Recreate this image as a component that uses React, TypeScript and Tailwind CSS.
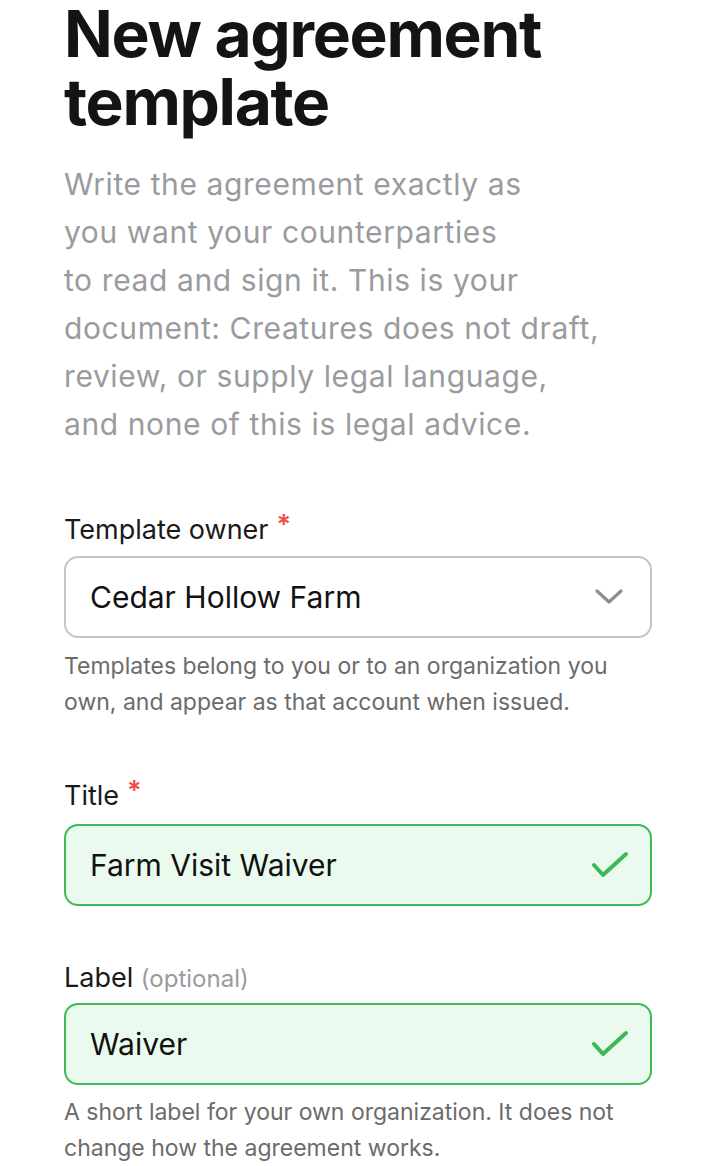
const font = { fontFamily: "Inter, 'Liberation Sans', sans-serif" };

function Required() {
  return <span className="relative -top-[5px] ml-[8px] font-semibold text-[#f04b4b]">*</span>;
}

function Chevron() {
  return (
    <svg width="28" height="16" viewBox="0 0 28 16" fill="none" className="shrink-0">
      <polyline points="2,2 14,13 26,2" stroke="#8c8d8f" strokeWidth="3.2" strokeLinecap="round" strokeLinejoin="round" />
    </svg>
  );
}

function Tick() {
  return (
    <svg width="38" height="28" viewBox="0 0 38 28" fill="none" className="shrink-0">
      <polyline points="4,14 13,24 36,3" stroke="#3cb854" strokeWidth="4" strokeLinecap="round" strokeLinejoin="round" />
    </svg>
  );
}

export default function App() {
  return (
    <div className="min-h-[1166px] bg-white px-16 text-[#141414]" style={font}>
      <h1 className="text-[64px] font-bold leading-[68px] tracking-[-0.02em]">
        New agreement
        <br />
        template
      </h1>

      <p className="mt-6 text-[30px] leading-[48px] tracking-[0.02em] text-[#9a9b9e]">
        Write the agreement exactly as
        <br />
        you want your counterparties
        <br />
        to read and sign it. This is your
        <br />
        document: Creatures does not draft,
        <br />
        review, or supply legal language,
        <br />
        and none of this is legal advice.
      </p>

      <label className="mt-16 block text-[27px] leading-[36px] text-[#1a1a1a]">
        Template owner
        <Required />
      </label>
      <div className="mt-2 flex h-[82px] items-center justify-between rounded-[14px] border-2 border-[#c4c5c7] pl-6 pr-[27px]">
        <span className="text-[30px] text-[#111]">Cedar Hollow Farm</span>
        <Chevron />
      </div>
      <p className="mt-[10px] text-[23px] leading-[36px] text-[#6b6b6b]">
        Templates belong to you or to an organization you own, and appear as that account when issued.
      </p>

      <label className="mt-[58px] block text-[27px] leading-[36px] text-[#1a1a1a]">
        Title
        <Required />
      </label>
      <div className="mt-[10px] flex h-[82px] items-center justify-between rounded-[14px] border-2 border-[#3dbb55] bg-[#ebfaee] pl-6 pr-[22px]">
        <span className="text-[30px] text-[#111]">Farm Visit Waiver</span>
        <Tick />
      </div>

      <label className="mt-[54px] block text-[27px] leading-[36px] text-[#1a1a1a]">
        Label <span className="text-[24px] text-[#9a9b9e]">(optional)</span>
      </label>
      <div className="mt-[6px] flex h-[82px] items-center justify-between rounded-[14px] border-2 border-[#3dbb55] bg-[#ebfaee] pl-6 pr-[22px]">
        <span className="text-[30px] text-[#111]">Waiver</span>
        <Tick />
      </div>
      <p className="mt-[9px] text-[23px] leading-[36px] text-[#6b6b6b]">
        A short label for your own organization. It does not change how the agreement works.
      </p>
    </div>
  );
}
